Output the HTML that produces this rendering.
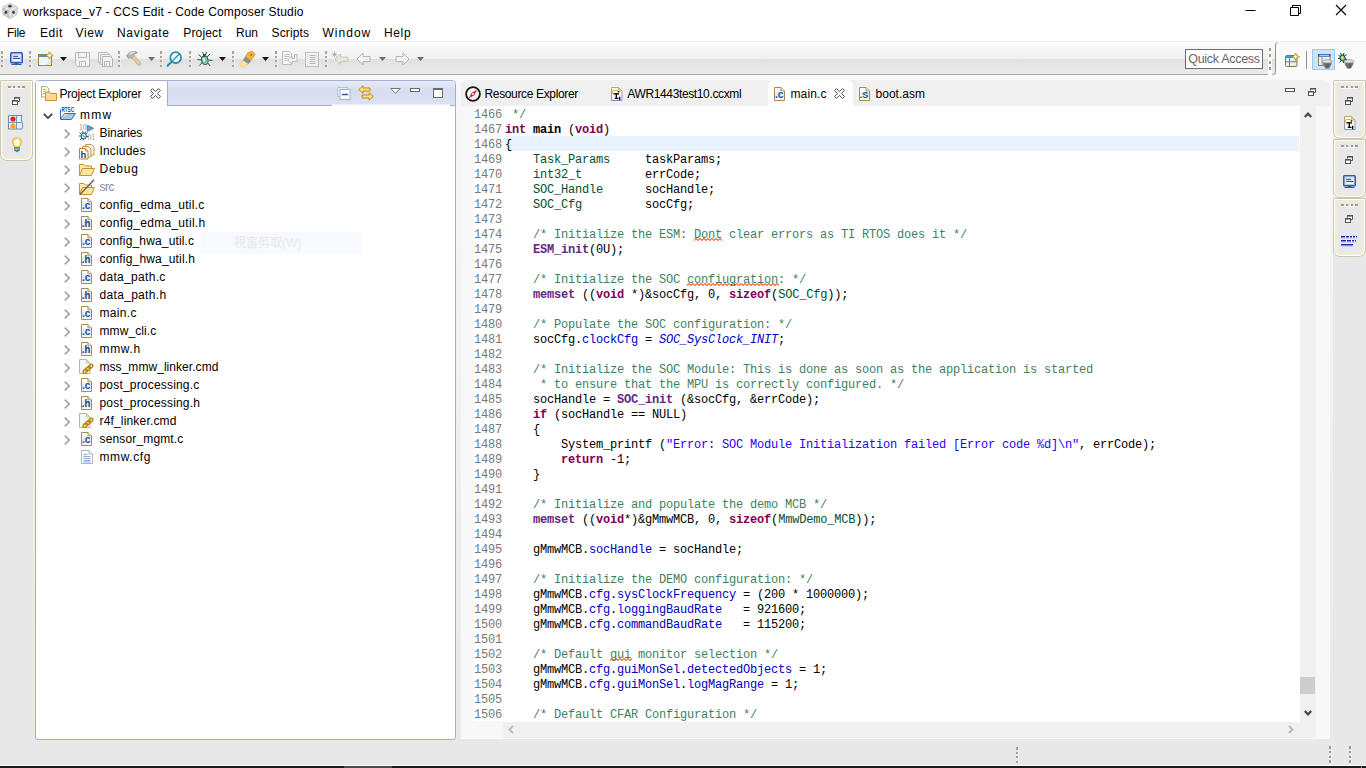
<!DOCTYPE html>
<html><head><meta charset="utf-8"><title>workspace_v7 - CCS Edit - Code Composer Studio</title>
<style>
*{box-sizing:border-box;margin:0;padding:0}
html,body{width:1366px;height:768px;overflow:hidden;background:#e8e8e8;font-family:"Liberation Sans","Noto Sans CJK TC",sans-serif;font-size:12px;color:#000}
.abs,.t,svg,.i{position:absolute}
svg{overflow:visible}
.t{white-space:nowrap;line-height:16px;height:16px}
#title{left:0;top:0;width:1366px;height:22px;background:#fff}
#menubar{left:0;top:22px;width:1366px;height:20px;background:#fff;border-bottom:1px solid #f0f0f0}
#toolbar{left:0;top:42px;width:1268px;height:33px;background:linear-gradient(#fcfcfc 0,#f0f0f0 17px,#e0e0e0 17px,#ebebeb 32px,#a8a8a8 32px,#a8a8a8 33px);}
#persp{left:1268px;top:42px;width:98px;height:38px;background:#fafafa}
#under{left:0;top:75px;width:1366px;height:5px;background:#f8f8f8;border-top:1px solid #fdfdfd}
#main{left:33px;top:80px;width:1300px;height:661px;background:linear-gradient(#f8f8f8,#e8e8e8)}
#pe{left:35px;top:80px;width:421px;height:660px;background:#fff;border:1px solid #a4afcf;border-radius:4px 4px 3px 3px;overflow:hidden}
#pehead{left:0;top:0;width:421px;height:25px;background:linear-gradient(#e6ebf8 0,#d6ddef 10px,#dbe3f3 24px);border-bottom:1px solid #a4aed0}
#petab{left:-1px;top:-1px;width:133px;height:26px;background:#fff;border-right:1px solid #a4aed0;border-radius:0 3px 0 0}
#ed{left:460px;top:80px;width:870px;height:659px;background:#fff;border-radius:7px 6px 3px 3px;overflow:hidden}
#edhead{left:0;top:0;width:870px;height:26px;background:#f0f0f0}
#edtab{left:308px;top:0;width:85px;height:26px;background:#fff;border-radius:6px 6px 0 0}
.code{position:absolute;left:45px;top:28px;font-family:"Liberation Mono",monospace;font-size:12px;letter-spacing:-.200px;line-height:15px;white-space:pre;color:#000}
.ln{position:absolute;left:14px;top:28px;width:28px;text-align:right;font-family:"Liberation Mono",monospace;font-size:12px;letter-spacing:-.200px;line-height:15px;white-space:pre;color:#787878}
.c{color:#3f7f5f}.k{color:#7f0055;font-weight:bold}.f{color:#642880;font-weight:bold}.ty{color:#005032}.fd{color:#0000c0}.en{color:#0000c0;font-style:italic}.s{color:#2a00ff}.b{font-weight:bold}
.row{position:absolute;left:0;height:18px;width:419px}
.stack{position:absolute;background:#eeebdc;width:33px}
.stack::before{content:"";position:absolute;left:0;top:0;right:0;bottom:0;border:1px solid #cbc6b4;border-radius:2px 2px 7px 7px;box-shadow:inset 0 0 0 1px #fff}
.stack::after{content:"";position:absolute;left:5px;top:5px;right:5px;bottom:5px;background:#e8e8e8}
.dots{position:absolute;height:2px;width:17px;background:linear-gradient(90deg,#a19a86 0,#a19a86 3px,transparent 3px,transparent 5px,#a19a86 5px,#a19a86 7px,transparent 7px,transparent 10px,#a19a86 10px,#a19a86 12px,transparent 12px,transparent 14px,#a19a86 14px,#a19a86 17px);box-shadow:0 1px 0 rgba(255,255,255,.6)}
.grip{position:absolute;width:2px;height:16px;top:8px;background:linear-gradient(180deg,#aaa28c 0,#aaa28c 3px,transparent 3px,transparent 5px,#aaa28c 5px,#aaa28c 7px,transparent 7px,transparent 9.500px,#aaa28c 9.500px,#aaa28c 11.500px,transparent 11.500px,transparent 14px,#aaa28c 14px,#aaa28c 16px);box-shadow:1px 0 0 rgba(255,255,255,.3)}
</style></head><body>
<div id="title" class="abs">
<svg style="left:2px;top:3px" width="16" height="16" viewBox="0 0 16 16"><g opacity=".9"><path d="M8 .5 L15.500 4 L14.800 11.500 L8 15.500 L1.200 11.500 L.5 4z" fill="#c8c8c8" stroke="#9a9a9a" stroke-width=".6"/><path d="M8 .5 L15.500 4 L8 7.500 L.5 4z" fill="#d0d0d0"/><path d="M.5 4 L8 7.500 L8 15.500 L1.200 11.500z" fill="#b8b8b8"/><path d="M8 7.500 L15.500 4 L14.800 11.500 L8 15.500z" fill="#cdcdcd"/><path d="M.5 4 L8 7.500 L15.500 4 M8 7.500 V15.500 M4.200 2.300 L11.800 5.800 M11.800 2.300 L4.200 5.800 M4.200 5.800 V13.300 M11.800 5.800 V13.300 M.8 7.800 L8 11.500 L15.200 7.800" fill="none" stroke="#fff" stroke-width=".8" opacity=".8"/><ellipse cx="8" cy="3.300" rx="1.900" ry="1.300" fill="#2a2a2a"/><ellipse cx="4" cy="9.300" rx="1.300" ry="1.800" fill="#2a2a2a"/><ellipse cx="11.500" cy="9.200" rx="1.300" ry="1.700" fill="#333"/></g></svg>
<span class="t" style="left:23.2px;top:4px;letter-spacing:0.18px;">workspace_v7 - CCS Edit - Code Composer Studio</span>
<svg style="left:1245px;top:4px" width="110" height="14" viewBox="0 0 110 14"><path d="M0.5 6.5h10" stroke="#000" stroke-width="1" fill="none"/><path d="M45.5 3.5h8v8h-8z M47.5 3.5v-2h8v8h-2" stroke="#000" stroke-width="1" fill="none"/><path d="M91 1l10 10M101 1l-10 10" stroke="#000" stroke-width="1.1" fill="none"/></svg>
</div>
<div id="menubar" class="abs">
<span class="t" style="left:7px;top:3px;letter-spacing:-0.28px;">File</span><span class="t" style="left:40px;top:3px;letter-spacing:0.54px;">Edit</span><span class="t" style="left:75.5px;top:3px;letter-spacing:0.63px;">View</span><span class="t" style="left:117px;top:3px;letter-spacing:0.66px;">Navigate</span><span class="t" style="left:183.3px;top:3px;letter-spacing:0.16px;">Project</span><span class="t" style="left:236px;top:3px;letter-spacing:-0.01px;">Run</span><span class="t" style="left:271.5px;top:3px;letter-spacing:0.14px;">Scripts</span><span class="t" style="left:322.5px;top:3px;letter-spacing:1.02px;">Window</span><span class="t" style="left:384px;top:3px;letter-spacing:0.64px;">Help</span>
</div>
<div id="under" class="abs"></div><div id="main" class="abs"></div>
<div id="persp" class="abs"></div>
<div id="toolbar" class="abs"><div class="abs" style="left:0;top:1px;width:0;height:0">
<div class="grip" style="left:1px"></div><div class="grip" style="left:29px"></div><div class="grip" style="left:118px"></div><div class="grip" style="left:160px"></div><div class="grip" style="left:189px"></div><div class="grip" style="left:232px"></div><div class="grip" style="left:275px"></div><div class="grip" style="left:325px"></div>
<!-- monitor -->
<svg style="left:10px;top:9px" width="13" height="14" viewBox="0 0 13 14"><rect x=".8" y=".8" width="11.400" height="9.900" rx=".8" fill="#eaf4ff" stroke="#2860b0" stroke-width="1.600"/><rect x="2" y="2" width="9" height="7.500" fill="none" stroke="#9aa8c0" stroke-width=".5"/><path d="M3.200 4.300h5M3.200 6.400h7" stroke="#28388a" stroke-width="1"/><path d="M4.500 11h4v1h3v1h-10v-1h3z" fill="#2860b0"/></svg>
<!-- new -->
<svg style="left:38px;top:9px" width="16" height="15" viewBox="0 0 16 15"><rect x=".5" y="2.500" width="13" height="11" fill="#ecf6ff" stroke="#a08838"/><rect x="1" y="3" width="12" height="2" fill="#3a9ad8"/><path d="M12.500 6 C12.500 11 8 13 3 13.200 L13 13z" fill="#f6e08a" opacity=".75"/><path d="M11.500 -.2 L12.700 2.300 L15.200 3.500 L12.700 4.700 L11.500 7.200 L10.300 4.700 L7.800 3.500 L10.300 2.300Z" fill="#fffbe6" stroke="#b89020" stroke-width="1"/></svg>
<svg style="left:60px;top:14px" width="7" height="4"><path d="M0 0h7L3.5 4z" fill="#111"/></svg>
<!-- save disabled -->
<svg style="left:75px;top:9px" width="15" height="15" viewBox="0 0 15 15"><path d="M.5 .5h14v14H2.5l-2-2z" fill="#f2f2f2" stroke="#b9b9b9"/><path d="M3.5 .5v5h8v-5M4.5 14.5v-5h6v5" fill="none" stroke="#b9b9b9"/><path d="M6.5 11v2.5" stroke="#b9b9b9"/></svg>
<!-- save all disabled -->
<svg style="left:98px;top:9px" width="15" height="15" viewBox="0 0 15 15"><path d="M.5 .5h9l2 2v8h-11z" fill="#f2f2f2" stroke="#bdbdbd"/><path d="M2.5 2.5h9l2 2v8h-11z" fill="#f2f2f2" stroke="#bdbdbd"/><path d="M4.500 4.500h8l2 2v8h-10z" fill="#f2f2f2" stroke="#b5b5b5"/><path d="M6.5 14.500v-5h5v5M8.500 11.500v2" fill="none" stroke="#b5b5b5"/></svg>
<!-- hammer -->
<svg style="left:126px;top:8px" width="16" height="16" viewBox="0 0 16 16"><path d="M.5 4.800 L4 1 L9.500 .4 L11.500 1.800 L9 2.400 L7.600 4 L8.400 5.300 L5.500 8 L4 6.400 L2.500 7.600z" fill="#b4b4b4" stroke="#8a8a8a" stroke-width=".7"/><path d="M4 1 L9.500 .4 L7 2.500 L3 4z" fill="#dcdcdc"/><path d="M5.800 6.500 L8.200 4.600 L15 12 L14.600 14 L12.500 14.800z" fill="#e4c8a6" stroke="#c6a47c" stroke-width=".7"/></svg>
<svg style="left:148px;top:14px" width="7" height="4"><path d="M0 0h7L3.500 4z" fill="#6c6c6c"/></svg>
<!-- search off -->
<svg style="left:166px;top:8px" width="17" height="17" viewBox="0 0 17 17"><circle cx="9.700" cy="6.600" r="5.400" fill="#fff" stroke="#2490ac" stroke-width="1.800"/><path d="M5.600 10.800 L1.600 14.800" stroke="#2490ac" stroke-width="2.200" stroke-linecap="round"/><path d="M13 3.200 L6.600 9.800" stroke="#2490ac" stroke-width="1.300"/></svg>
<!-- bug -->
<svg style="left:197px;top:8px" width="16" height="16" viewBox="0 0 16 16"><path d="M1.500 3.500l3.500 3M13 3l-3 3.200M.3 8.500l4 .5M15.500 9.500l-4-.5M2.500 14.500l3-3.500M13 15l-2.500-3.500M5.500 1l1.500 3.500M9.500 .8l-1 3.500" stroke="#1f5c54" stroke-width="1" fill="none"/><ellipse cx="7.800" cy="9.200" rx="3.200" ry="4.400" fill="#8fc39c" stroke="#1f5c54" stroke-width="1" transform="rotate(-12 7.800 9.200)"/><circle cx="7.400" cy="4.600" r="1.500" fill="#1f5c54"/><ellipse cx="7" cy="8.800" rx="1.100" ry="2" fill="#e2f0dc" transform="rotate(-12 7 8.800)"/></svg>
<svg style="left:219px;top:14px" width="7" height="4"><path d="M0 0h7L3.500 4z" fill="#111"/></svg>
<!-- flashlight -->
<svg style="left:239px;top:8px" width="17" height="17" viewBox="0 0 17 17"><path d="M9 1.500 L13.500 .5 L16 3.500 L11.500 10 L6.500 6z" fill="#f7b63c" stroke="#d48a17" stroke-width=".8"/><path d="M6.500 6 L11.500 10 L9 13 L4 9.500z" fill="#8f8f96" stroke="#77777e" stroke-width=".6"/><path d="M4 9.500 L9 13 L4.500 16 L.8 14.500z" fill="#ffeaa0" stroke="#e8c050" stroke-width=".6"/><circle cx="12.300" cy="3.800" r=".9" fill="#3465a8"/></svg>
<svg style="left:262px;top:14px" width="7" height="4"><path d="M0 0h7L3.500 4z" fill="#111"/></svg>
<!-- disabled doc arrow -->
<svg style="left:282px;top:8px" width="16" height="16" viewBox="0 0 16 16"><path d="M.5 .5h7l2 2v11h-9z" fill="#f4f4f4" stroke="#bcbcbc"/><path d="M2.500 3.500h5M2.500 5.500h5M2.500 7.500h3M2.500 9.500h2" stroke="#c2c2c2"/><path d="M12.500 3.500h2.500v7h-5v2.500l-4.500-4 4.500-4v2.500h2.500z" fill="#f2f2f2" stroke="#b4b4b4" stroke-width=".9"/></svg>
<!-- disabled list -->
<svg style="left:305px;top:9px" width="15" height="15" viewBox="0 0 15 15"><rect x=".5" y=".5" width="13" height="14" fill="#f4f4f4" stroke="#c0c0c0"/><path d="M4.500 3.500h6M4.500 5.500h6M4.500 7.500h6M4.500 9.500h6M4.500 11.500h6" stroke="#b4b4b4"/><path d="M2.500 2v11M12 2v11" stroke="#d0d0d0" stroke-dasharray="1 1"/></svg>
<!-- last edit -->
<svg style="left:332px;top:8px" width="17" height="16" viewBox="0 0 17 16"><path d="M3 8 L8.500 3 V6 H16 V10.500 H8.500 V13.500z" fill="#e9e6d6" stroke="#c9c5b4" stroke-width=".9"/><path d="M2.500 .5v6M-.2 3.500h5.400M.6 1.600l3.800 3.800M4.400 1.600L.6 5.400" stroke="#8f9ab8" stroke-width=".6"/></svg>
<!-- back -->
<svg style="left:356px;top:8px" width="15" height="16" viewBox="0 0 15 16"><path d="M1 8 L7 2 V5.500 H14 V10.500 H7 V14z" fill="#f3f3f3" stroke="#b4b4b4" stroke-width="1"/></svg>
<svg style="left:379px;top:14px" width="7" height="4"><path d="M0 0h7L3.500 4z" fill="#6c6c6c"/></svg>
<!-- fwd -->
<svg style="left:395px;top:8px" width="15" height="16" viewBox="0 0 15 16"><path d="M14 8 L8 2 V5.500 H1 V10.500 H8 V14z" fill="#f3f3f3" stroke="#b4b4b4" stroke-width="1"/></svg>
<svg style="left:417px;top:14px" width="7" height="4"><path d="M0 0h7L3.500 4z" fill="#6c6c6c"/></svg>
<!-- quick access -->
<div class="abs" style="left:1185px;top:6px;width:78px;height:20px;background:#fff;border:1px solid #6e6e6e"></div>
<span class="t" style="left:1188.3px;top:7.5px;letter-spacing:-0.30px;font-size:12.5px;color:#666">Quick Access</span>
</div></div>
<!-- perspective switcher -->
<div class="abs" style="left:1272px;top:42px;width:4px;height:33px;background:linear-gradient(#fafafa 0,#f0f0f0 17px,#e2e2e2 17px,#ebebeb 32px)"></div><svg style="left:1270px;top:42px" width="8" height="34" viewBox="0 0 8 34"><path d="M7.500 .5 Q5.500 .8 5.500 3 V30 Q5.500 32.500 2.500 32.500" fill="none" stroke="#8e8e8e" stroke-width="1"/></svg><div class="abs" style="left:1269px;top:48px;width:2px;height:22px;background:linear-gradient(180deg,#a39a82 0,#a39a82 3px,transparent 3px,transparent 6.500px,#a39a82 6.500px,#a39a82 9.500px,transparent 9.500px,transparent 13px,#a39a82 13px,#a39a82 16px,transparent 16px,transparent 19px,#a39a82 19px,#a39a82 22px)"></div>
<svg style="left:1285px;top:52px" width="15" height="15" viewBox="0 0 15 15"><rect x=".5" y="3.500" width="11.500" height="11" rx="1" fill="#dff2ff" stroke="#8c7434"/><rect x="1" y="4" width="10.500" height="2" fill="#4a90d8"/><path d="M4.500 6v8.500M.5 9.800h11.500" stroke="#8c7434" stroke-width=".9"/><path d="M10.700 1 L11.800 3.600 L14.400 4.700 L11.800 5.800 L10.700 8.400 L9.600 5.800 L7 4.700 L9.600 3.600Z" fill="#fffdf0" stroke="#c09020" stroke-width="1"/></svg>
<div class="abs" style="left:1306px;top:51px;width:1px;height:18px;background:#8c8c8c"></div>
<div class="abs" style="left:1312px;top:49px;width:23px;height:21px;background:#cce4f7;border:1px solid #99c9ef"></div>
<svg style="left:1318px;top:54px" width="15" height="14" viewBox="0 0 15 14"><rect x=".5" y=".5" width="11.500" height="11" fill="#dff2ff" stroke="#a08848"/><rect x="0" y="0" width="12.500" height="2.700" fill="#2a5cc0"/><path d="M1.500 1.350h9.500" stroke="#fff" stroke-width=".8"/><path d="M4 2.700v9" stroke="#a08848" stroke-width=".9"/><defs><linearGradient id="gC" x1="0" y1="0" x2="1" y2="0"><stop offset="0" stop-color="#8e8e8e"/><stop offset=".55" stop-color="#5c5c5c"/><stop offset="1" stop-color="#8a8a8a"/></linearGradient></defs><path d="M4.4 7.200 h9.600 l-.6 3.500 l-2.400 3.700 h-3.600 l-2.400-3.700z" fill="url(#gC)"/><ellipse cx="9.2" cy="7.400" rx="4.800" ry="1.700" fill="#e2e2e2" stroke="#8c8c8c" stroke-width=".7"/></svg>
<svg style="left:1338px;top:53px" width="17" height="15" viewBox="0 0 17 15"><path d="M.5 2.500l3 1.800M8.500 1.500l-2.700 2.300M0 5.500l3 .2M9 6.500l-3-.5M1.500 9.500l2-2.500M5.500 10l-.5-2.500M2.500 0l1.200 3M6 0l-.8 3" stroke="#0c4038" stroke-width="1" fill="none"/><ellipse cx="4.600" cy="5" rx="2.500" ry="2.900" fill="#8fd45c" stroke="#0c4038" stroke-width=".9" transform="rotate(-25 4.600 5)"/><circle cx="4.200" cy="4.600" r=".9" fill="#f0ffd8"/><defs><linearGradient id="gD" x1="0" y1="0" x2="1" y2="0"><stop offset="0" stop-color="#8e8e8e"/><stop offset=".55" stop-color="#5c5c5c"/><stop offset="1" stop-color="#8a8a8a"/></linearGradient></defs><path d="M6.2 8.200 h9.600 l-.6 3.500 l-2.400 3.700 h-3.600 l-2.400-3.700z" fill="url(#gD)"/><ellipse cx="11" cy="8.400" rx="4.800" ry="1.700" fill="#e2e2e2" stroke="#8c8c8c" stroke-width=".7"/></svg>
<!-- left trim stack -->
<div class="stack" style="left:0;top:80px;height:81px"></div>
<div class="dots" style="left:8px;top:86px"></div>
<svg style="left:12px;top:97px" width="8" height="8" viewBox="0 0 8 8"><path d="M2.500 2.500v-2h5v4h-1.500" fill="#fff" stroke="#5a524a" stroke-width="1"/><path d="M2 .8h6" stroke="#5a524a" stroke-width="1.600"/><rect x=".5" y="3.500" width="5" height="4" fill="#fff" stroke="#5a524a"/><path d="M0 3.800h6" stroke="#5a524a" stroke-width="1.600"/></svg>
<svg style="left:8px;top:115px" width="15" height="15" viewBox="0 0 15 15"><path d="M.5 .5h13.500q-1.500 3.500 0 7t0 6.500h-13.500z" fill="#e8f0fa" stroke="#6a8cc0"/><path d="M.5 7.500h13M8.500 .5v13.500" stroke="#6a8cc0" stroke-width=".9"/><circle cx="5" cy="4" r="2.600" fill="#e0282c"/><path d="M2.500 13.500v-2.500a2.500 2.500 0 0 1 5 0v2.500z" fill="#f5a623"/></svg>
<svg style="left:11.500px;top:137px" width="10" height="15.500" viewBox="0 0 11 17"><path d="M5.500 .8a4.700 4.700 0 0 1 4.700 4.700c0 2.200-1.700 3-2 5.500h-5.400c-.3-2.500-2-3.300-2-5.500a4.700 4.700 0 0 1 4.700-4.700z" fill="#fff3c4" stroke="#f0b020" stroke-width="1.300"/><ellipse cx="5.500" cy="6.500" rx="2.200" ry="3" fill="#fff" opacity=".8"/><rect x="3" y="11.500" width="5" height="3.500" fill="#7fa7d8" stroke="#4a6a98" stroke-width=".8"/><path d="M4 16h3" stroke="#4a6a98"/></svg>
<div id="pe" class="abs"><div id="pehead" class="abs"></div><div class="abs" style="left:296px;top:24px;width:118px;height:1px;background:#fff"></div><div class="abs" style="left:296px;top:23px;width:118px;height:1px;background:rgba(255,255,255,.45)"></div><div id="petab" class="abs"></div>
<svg style="left:5px;top:5px" width="16" height="15" viewBox="0 0 16 15"><path d="M.5 .5h5l2.500 2.500v8h-7.500z" fill="#fffdf5" stroke="#b5a47c"/><path d="M2 3.500h3M2 5.500h2M2 7.500h2" stroke="#8aa6d8" stroke-width=".9"/><path d="M4.500 14.500v-8.500h4l1.200 1.500h5.800v7z" fill="#fbdc8c" stroke="#c8922c"/></svg>
<span class="t" style="left:23.5px;top:5px;letter-spacing:-0.23px;">Project Explorer</span>
<svg style="left:114px;top:7px" width="11" height="11" viewBox="0 0 11 11"><path d="M.6 2.500 L2.500 .6 L5.500 3.600 L8.500 .6 L10.400 2.500 L7.400 5.500 L10.400 8.500 L8.500 10.400 L5.500 7.400 L2.500 10.400 L.6 8.500 L3.600 5.500z" fill="#fff" stroke="#4c4c4c" stroke-width="1"/></svg>
<svg style="left:301px;top:6px" width="14" height="13" viewBox="0 0 14 13"><rect x=".5" y=".5" width="10" height="9" fill="#e8eef8" stroke="#b4c0d8"/><rect x="3" y="2.500" width="10" height="10" fill="#fff" stroke="#9fb0cc"/><path d="M5 7.500h6" stroke="#1f5fa8" stroke-width="1.500"/></svg>
<svg style="left:322px;top:4px" width="16" height="16" viewBox="0 0 16 16"><path d="M.8 4.500 L5 .8 V3 H12 V6 H5 V8.200z" fill="#fde08a" stroke="#c8860b" stroke-width="1"/><path d="M15.200 11.500 L11 7.800 V10 H4 V13 H11 V15.200z" fill="#fde08a" stroke="#c8860b" stroke-width="1"/></svg>
<svg style="left:354px;top:7px" width="11" height="6" viewBox="0 0 11 6"><path d="M.8 .5h9.400L5.500 5.300z" fill="#fff" stroke="#6a6a6a" stroke-width=".9"/></svg>
<div class="abs" style="left:374px;top:7px;width:10px;height:4px;background:#fff;border:1px solid #6a6a6a"></div>
<div class="abs" style="left:397px;top:7px;width:10px;height:10px;background:#fff;border:1px solid #6a6a6a;border-top-width:2px"></div>
<div class="abs" style="left:165px;top:151px;width:160px;height:22px;background:#f6f9fd"></div>
<span class="t" style="left:198px;top:154px;color:#e9e9e9;font-size:12px">視窗剪取(W)</span>
<svg style="left:7px;top:32px" width="10" height="6" viewBox="0 0 10 6"><path d="M.8 .8 L5 5 L9.200 .8" fill="none" stroke="#3c3c3c" stroke-width="1.700"/></svg><svg style="left:24px;top:26px" width="16" height="15" viewBox="0 0 16 15"><text x="1.500" y="5.200" font-family="Liberation Sans,sans-serif" font-size="6.800" font-weight="bold" fill="#1f3f8c" textLength="12.500" lengthAdjust="spacingAndGlyphs">RTSC</text><path d="M.5 12 V2.500" stroke="#3c6ab4"/><path d="M.5 12.500 L4.500 6.500 H15.500 L11.500 12.500z" fill="#a9c8ee" stroke="#3c6ab4"/><path d="M1.200 11.800 L4.700 7 L7.500 7z" fill="#f8e08a"/></svg><span class="t" style="left:44px;top:26px;letter-spacing:1.26px;">mmw</span>
<svg style="left:28px;top:48px" width="6" height="10" viewBox="0 0 6 10"><path d="M.8 .6 L5.200 5 L.8 9.400" fill="none" stroke="#a2a2a2" stroke-width="1.700"/></svg><svg style="left:43px;top:43px" width="17" height="17" viewBox="0 0 17 17"><text x="0" y="6.400" font-family="Liberation Serif,serif" font-size="7.500" fill="#8c8c8c">10</text><text x="8.400" y="15.600" font-family="Liberation Serif,serif" font-size="7.500" fill="#8c8c8c">01</text><path d="M8.300 1.200 L14.600 4.300 L8.300 7.400z" fill="#6f9cc0" stroke="#3c6c94" stroke-width=".8"/><path d="M.5 8.500l2.500 2M0 12h2.500M1 16l2.500-2.500M8.500 8.500l-2 2M9.500 12.500h-2.500M3.500 7l1 2.500M6.500 7.500l-.7 2M4 16.500l.5-2" stroke="#27507c" stroke-width="1" fill="none"/><ellipse cx="4.800" cy="12" rx="2.600" ry="2.900" fill="#d4ece4" stroke="#27507c" stroke-width="1"/><path d="M3.500 11l2.500 2" stroke="#3c9c5c" stroke-width="1"/></svg><span class="t" style="left:63.5px;top:44px;letter-spacing:-0.07px;">Binaries</span>
<svg style="left:28px;top:66px" width="6" height="10" viewBox="0 0 6 10"><path d="M.8 .6 L5.200 5 L.8 9.400" fill="none" stroke="#a2a2a2" stroke-width="1.700"/></svg><svg style="left:43px;top:62px" width="16" height="17" viewBox="0 0 16 17"><path d="M6.500 1.500h6l2.500 2.500v8h-8.500z" fill="#fbf7ec" stroke="#c08a3c" stroke-width=".9"/><path d="M3.500 3.500h6l2.500 2.500v8h-8.500z" fill="#f7f4ee" stroke="#c08a3c" stroke-width=".9"/><path d="M.5 5.500h6l2.500 2.500v8h-8.500z" fill="#fff" stroke="#b8822c"/><path d="M6.500 5.500v2.500h2.500" fill="#f3e2b8" stroke="#b8822c" stroke-width=".8"/><text x="1.600" y="14.800" font-family="Liberation Sans,sans-serif" font-weight="bold" font-size="9.500" fill="#1c3c7c">h</text></svg><span class="t" style="left:63.5px;top:62px;letter-spacing:0.17px;">Includes</span>
<svg style="left:28px;top:84px" width="6" height="10" viewBox="0 0 6 10"><path d="M.8 .6 L5.200 5 L.8 9.400" fill="none" stroke="#a2a2a2" stroke-width="1.700"/></svg><svg style="left:43px;top:82px" width="16" height="13" viewBox="0 0 16 13"><path d="M.5 12.500v-11h4.500l1.500 1.500h6v3" fill="#fbe9b8" stroke="#c8922c"/><path d="M.5 12.500 L3.500 5.500 H15.500 L12.500 12.500z" fill="#fce5a2" stroke="#c8922c"/></svg><span class="t" style="left:63.5px;top:80px;letter-spacing:0.76px;">Debug</span>
<svg style="left:28px;top:102px" width="6" height="10" viewBox="0 0 6 10"><path d="M.8 .6 L5.200 5 L.8 9.400" fill="none" stroke="#a2a2a2" stroke-width="1.700"/></svg><svg style="left:43px;top:98px" width="16" height="16" viewBox="0 0 16 16"><path d="M.5 15.500v-11h4.500l1.500 1.500h6v3" fill="#fbe9b8" stroke="#c8922c"/><path d="M.5 15.500 L3.500 8.500 H15.500 L12.500 15.500z" fill="#fce5a2" stroke="#c8922c"/><path d="M1 15.500 L15 .8" stroke="#6a5a5a" stroke-width="1.300"/></svg><span class="t" style="left:63.5px;top:98px;letter-spacing:-0.55px;color:#8c8c8c">src</span>
<svg style="left:28px;top:120px" width="6" height="10" viewBox="0 0 6 10"><path d="M.8 .6 L5.200 5 L.8 9.400" fill="none" stroke="#a2a2a2" stroke-width="1.700"/></svg><svg style="left:45px;top:117px" width="12" height="14" viewBox="0 0 12 14"><path d="M.5 .5h6.500l3.500 3.500v9.500h-10z" fill="#fff" stroke="#a48b52"/><path d="M7 .5v3.500h3.500" fill="#f3ead0" stroke="#a48b52"/><rect x="1" y="4.500" width="9" height="7" fill="#e4ecf8"/><text x="1" y="11" font-family="Liberation Sans,sans-serif" font-weight="bold" font-size="10.500" fill="#1f4f9c" textLength="8.500" lengthAdjust="spacingAndGlyphs">.c</text></svg><span class="t" style="left:63.5px;top:116px;letter-spacing:0.28px;">config_edma_util.c</span>
<svg style="left:28px;top:138px" width="6" height="10" viewBox="0 0 6 10"><path d="M.8 .6 L5.200 5 L.8 9.400" fill="none" stroke="#a2a2a2" stroke-width="1.700"/></svg><svg style="left:45px;top:135px" width="12" height="14" viewBox="0 0 12 14"><path d="M.5 .5h6.500l3.500 3.500v9.500h-10z" fill="#fff" stroke="#a48b52"/><path d="M7 .5v3.500h3.500" fill="#f3ead0" stroke="#a48b52"/><rect x="1" y="4.500" width="9" height="7" fill="#e4ecf8"/><text x=".8" y="11.200" font-family="Liberation Sans,sans-serif" font-weight="bold" font-size="10" fill="#1f3f7c" textLength="8.500" lengthAdjust="spacingAndGlyphs">.h</text></svg><span class="t" style="left:63.5px;top:134px;letter-spacing:0.29px;">config_edma_util.h</span>
<svg style="left:28px;top:156px" width="6" height="10" viewBox="0 0 6 10"><path d="M.8 .6 L5.200 5 L.8 9.400" fill="none" stroke="#a2a2a2" stroke-width="1.700"/></svg><svg style="left:45px;top:153px" width="12" height="14" viewBox="0 0 12 14"><path d="M.5 .5h6.500l3.500 3.500v9.500h-10z" fill="#fff" stroke="#a48b52"/><path d="M7 .5v3.500h3.500" fill="#f3ead0" stroke="#a48b52"/><rect x="1" y="4.500" width="9" height="7" fill="#e4ecf8"/><text x="1" y="11" font-family="Liberation Sans,sans-serif" font-weight="bold" font-size="10.500" fill="#1f4f9c" textLength="8.500" lengthAdjust="spacingAndGlyphs">.c</text></svg><span class="t" style="left:63.5px;top:152px;letter-spacing:0.16px;">config_hwa_util.c</span>
<svg style="left:28px;top:174px" width="6" height="10" viewBox="0 0 6 10"><path d="M.8 .6 L5.200 5 L.8 9.400" fill="none" stroke="#a2a2a2" stroke-width="1.700"/></svg><svg style="left:45px;top:171px" width="12" height="14" viewBox="0 0 12 14"><path d="M.5 .5h6.500l3.500 3.500v9.500h-10z" fill="#fff" stroke="#a48b52"/><path d="M7 .5v3.500h3.500" fill="#f3ead0" stroke="#a48b52"/><rect x="1" y="4.500" width="9" height="7" fill="#e4ecf8"/><text x=".8" y="11.200" font-family="Liberation Sans,sans-serif" font-weight="bold" font-size="10" fill="#1f3f7c" textLength="8.500" lengthAdjust="spacingAndGlyphs">.h</text></svg><span class="t" style="left:63.5px;top:170px;letter-spacing:0.17px;">config_hwa_util.h</span>
<svg style="left:28px;top:192px" width="6" height="10" viewBox="0 0 6 10"><path d="M.8 .6 L5.200 5 L.8 9.400" fill="none" stroke="#a2a2a2" stroke-width="1.700"/></svg><svg style="left:45px;top:189px" width="12" height="14" viewBox="0 0 12 14"><path d="M.5 .5h6.500l3.500 3.500v9.500h-10z" fill="#fff" stroke="#a48b52"/><path d="M7 .5v3.500h3.500" fill="#f3ead0" stroke="#a48b52"/><rect x="1" y="4.500" width="9" height="7" fill="#e4ecf8"/><text x="1" y="11" font-family="Liberation Sans,sans-serif" font-weight="bold" font-size="10.500" fill="#1f4f9c" textLength="8.500" lengthAdjust="spacingAndGlyphs">.c</text></svg><span class="t" style="left:63.5px;top:188px;letter-spacing:0.31px;">data_path.c</span>
<svg style="left:28px;top:210px" width="6" height="10" viewBox="0 0 6 10"><path d="M.8 .6 L5.200 5 L.8 9.400" fill="none" stroke="#a2a2a2" stroke-width="1.700"/></svg><svg style="left:45px;top:207px" width="12" height="14" viewBox="0 0 12 14"><path d="M.5 .5h6.500l3.500 3.500v9.500h-10z" fill="#fff" stroke="#a48b52"/><path d="M7 .5v3.500h3.500" fill="#f3ead0" stroke="#a48b52"/><rect x="1" y="4.500" width="9" height="7" fill="#e4ecf8"/><text x=".8" y="11.200" font-family="Liberation Sans,sans-serif" font-weight="bold" font-size="10" fill="#1f3f7c" textLength="8.500" lengthAdjust="spacingAndGlyphs">.h</text></svg><span class="t" style="left:63.5px;top:206px;letter-spacing:0.32px;">data_path.h</span>
<svg style="left:28px;top:228px" width="6" height="10" viewBox="0 0 6 10"><path d="M.8 .6 L5.200 5 L.8 9.400" fill="none" stroke="#a2a2a2" stroke-width="1.700"/></svg><svg style="left:45px;top:225px" width="12" height="14" viewBox="0 0 12 14"><path d="M.5 .5h6.500l3.500 3.500v9.500h-10z" fill="#fff" stroke="#a48b52"/><path d="M7 .5v3.500h3.500" fill="#f3ead0" stroke="#a48b52"/><rect x="1" y="4.500" width="9" height="7" fill="#e4ecf8"/><text x="1" y="11" font-family="Liberation Sans,sans-serif" font-weight="bold" font-size="10.500" fill="#1f4f9c" textLength="8.500" lengthAdjust="spacingAndGlyphs">.c</text></svg><span class="t" style="left:63.5px;top:224px;letter-spacing:0.33px;">main.c</span>
<svg style="left:28px;top:246px" width="6" height="10" viewBox="0 0 6 10"><path d="M.8 .6 L5.200 5 L.8 9.400" fill="none" stroke="#a2a2a2" stroke-width="1.700"/></svg><svg style="left:45px;top:243px" width="12" height="14" viewBox="0 0 12 14"><path d="M.5 .5h6.500l3.500 3.500v9.500h-10z" fill="#fff" stroke="#a48b52"/><path d="M7 .5v3.500h3.500" fill="#f3ead0" stroke="#a48b52"/><rect x="1" y="4.500" width="9" height="7" fill="#e4ecf8"/><text x="1" y="11" font-family="Liberation Sans,sans-serif" font-weight="bold" font-size="10.500" fill="#1f4f9c" textLength="8.500" lengthAdjust="spacingAndGlyphs">.c</text></svg><span class="t" style="left:63.5px;top:242px;letter-spacing:0.10px;">mmw_cli.c</span>
<svg style="left:28px;top:264px" width="6" height="10" viewBox="0 0 6 10"><path d="M.8 .6 L5.200 5 L.8 9.400" fill="none" stroke="#a2a2a2" stroke-width="1.700"/></svg><svg style="left:45px;top:261px" width="12" height="14" viewBox="0 0 12 14"><path d="M.5 .5h6.500l3.500 3.500v9.500h-10z" fill="#fff" stroke="#a48b52"/><path d="M7 .5v3.500h3.500" fill="#f3ead0" stroke="#a48b52"/><rect x="1" y="4.500" width="9" height="7" fill="#e4ecf8"/><text x=".8" y="11.200" font-family="Liberation Sans,sans-serif" font-weight="bold" font-size="10" fill="#1f3f7c" textLength="8.500" lengthAdjust="spacingAndGlyphs">.h</text></svg><span class="t" style="left:63.5px;top:260px;letter-spacing:0.65px;">mmw.h</span>
<svg style="left:28px;top:282px" width="6" height="10" viewBox="0 0 6 10"><path d="M.8 .6 L5.200 5 L.8 9.400" fill="none" stroke="#a2a2a2" stroke-width="1.700"/></svg><svg style="left:43px;top:278px" width="15" height="15" viewBox="0 0 15 15"><path d="M.5 .5h7l3.500 3.500v10.500h-10.500z" fill="#f4f7fb" stroke="#b4b4b4"/><path d="M7.500 .5v3.500h3.500z" fill="#f3e6b8" stroke="#c8b888" stroke-width=".8"/><g fill="none" stroke="#b8860b" stroke-width="1.400"><ellipse cx="6.300" cy="12.300" rx="2.600" ry="1.600" transform="rotate(-42 6.300 12.300)"/><ellipse cx="9" cy="9.800" rx="2.800" ry="1.700" transform="rotate(-42 9 9.800)"/><ellipse cx="11.700" cy="7.400" rx="2.500" ry="1.600" transform="rotate(-42 11.700 7.400)"/></g></svg><span class="t" style="left:63.5px;top:278px;letter-spacing:0.05px;">mss_mmw_linker.cmd</span>
<svg style="left:28px;top:300px" width="6" height="10" viewBox="0 0 6 10"><path d="M.8 .6 L5.200 5 L.8 9.400" fill="none" stroke="#a2a2a2" stroke-width="1.700"/></svg><svg style="left:45px;top:297px" width="12" height="14" viewBox="0 0 12 14"><path d="M.5 .5h6.500l3.500 3.500v9.500h-10z" fill="#fff" stroke="#a48b52"/><path d="M7 .5v3.500h3.500" fill="#f3ead0" stroke="#a48b52"/><rect x="1" y="4.500" width="9" height="7" fill="#e4ecf8"/><text x="1" y="11" font-family="Liberation Sans,sans-serif" font-weight="bold" font-size="10.500" fill="#1f4f9c" textLength="8.500" lengthAdjust="spacingAndGlyphs">.c</text></svg><span class="t" style="left:63.5px;top:296px;letter-spacing:0.19px;">post_processing.c</span>
<svg style="left:28px;top:318px" width="6" height="10" viewBox="0 0 6 10"><path d="M.8 .6 L5.200 5 L.8 9.400" fill="none" stroke="#a2a2a2" stroke-width="1.700"/></svg><svg style="left:45px;top:315px" width="12" height="14" viewBox="0 0 12 14"><path d="M.5 .5h6.500l3.500 3.500v9.500h-10z" fill="#fff" stroke="#a48b52"/><path d="M7 .5v3.500h3.500" fill="#f3ead0" stroke="#a48b52"/><rect x="1" y="4.500" width="9" height="7" fill="#e4ecf8"/><text x=".8" y="11.200" font-family="Liberation Sans,sans-serif" font-weight="bold" font-size="10" fill="#1f3f7c" textLength="8.500" lengthAdjust="spacingAndGlyphs">.h</text></svg><span class="t" style="left:63.5px;top:314px;letter-spacing:0.19px;">post_processing.h</span>
<svg style="left:28px;top:336px" width="6" height="10" viewBox="0 0 6 10"><path d="M.8 .6 L5.200 5 L.8 9.400" fill="none" stroke="#a2a2a2" stroke-width="1.700"/></svg><svg style="left:43px;top:332px" width="15" height="15" viewBox="0 0 15 15"><path d="M.5 .5h7l3.500 3.500v10.500h-10.500z" fill="#f4f7fb" stroke="#b4b4b4"/><path d="M7.500 .5v3.500h3.500z" fill="#f3e6b8" stroke="#c8b888" stroke-width=".8"/><g fill="none" stroke="#b8860b" stroke-width="1.400"><ellipse cx="6.300" cy="12.300" rx="2.600" ry="1.600" transform="rotate(-42 6.300 12.300)"/><ellipse cx="9" cy="9.800" rx="2.800" ry="1.700" transform="rotate(-42 9 9.800)"/><ellipse cx="11.700" cy="7.400" rx="2.500" ry="1.600" transform="rotate(-42 11.700 7.400)"/></g></svg><span class="t" style="left:63.5px;top:332px;letter-spacing:0.17px;">r4f_linker.cmd</span>
<svg style="left:28px;top:354px" width="6" height="10" viewBox="0 0 6 10"><path d="M.8 .6 L5.200 5 L.8 9.400" fill="none" stroke="#a2a2a2" stroke-width="1.700"/></svg><svg style="left:45px;top:351px" width="12" height="14" viewBox="0 0 12 14"><path d="M.5 .5h6.500l3.500 3.500v9.500h-10z" fill="#fff" stroke="#a48b52"/><path d="M7 .5v3.500h3.500" fill="#f3ead0" stroke="#a48b52"/><rect x="1" y="4.500" width="9" height="7" fill="#e4ecf8"/><text x="1" y="11" font-family="Liberation Sans,sans-serif" font-weight="bold" font-size="10.500" fill="#1f4f9c" textLength="8.500" lengthAdjust="spacingAndGlyphs">.c</text></svg><span class="t" style="left:63.5px;top:350px;letter-spacing:0.15px;">sensor_mgmt.c</span>
<svg style="left:45px;top:369px" width="12" height="14" viewBox="0 0 12 14"><path d="M.5 .5h7.500l3.500 3.500v9.500h-11z" fill="#fff" stroke="#b0b4bc"/><path d="M8 .5v3.500h3.500" fill="#eef0f4" stroke="#b0b4bc"/><path d="M2.500 4.500h4M2.500 6.500h7M2.500 8.500h7M2.500 10.500h7M2.500 12h7" stroke="#7f9fd0" stroke-width=".9"/></svg><span class="t" style="left:63.5px;top:368px;letter-spacing:0.59px;">mmw.cfg</span>
</div>
<div id="ed" class="abs"><div id="edhead" class="abs"></div><div id="edtab" class="abs"></div>
<svg style="left:5px;top:6px" width="16" height="16" viewBox="0 0 16 16"><circle cx="8" cy="8" r="6.900" fill="#f8f8f8" stroke="#161616" stroke-width="1.800"/><path d="M12.200 3.800 L9.300 9.300 L3.800 12.200 L6.700 6.700z" fill="#d8232a"/><circle cx="8" cy="8" r="1" fill="#fff"/></svg>
<span class="t" style="left:24.5px;top:6px;letter-spacing:-0.35px;">Resource Explorer</span>
<svg style="left:151px;top:7px" width="12" height="14" viewBox="0 0 12 14"><defs><linearGradient id="gA" x1="0" y1="0" x2="0" y2="1"><stop offset="0" stop-color="#c0aa6c"/><stop offset="1" stop-color="#7f96c8"/></linearGradient></defs><path d="M.5 .5h7l3.500 3.500v9.500h-10.500z" fill="#f4f7fd" stroke="url(#gA)"/><path d="M7.500 .5v3.500h3.500z" fill="#ecd9a0" stroke="#c8aa60" stroke-width=".7"/><rect x="1.500" y="3.500" width="5.500" height="3" rx="1.200" fill="#fff" stroke="#e2b24e" stroke-width="1.100"/><path d="M2.500 6.800h5.500M5.300 6.800v4.500M3.800 11.300h3.700M8.700 9.800v3.400M7.600 4.300v1.200" stroke="#000" stroke-width="1.300" fill="none"/></svg>
<span class="t" style="left:167.3px;top:6px;letter-spacing:-0.37px;">AWR1443test10.ccxml</span>
<svg style="left:314px;top:7px" width="12" height="14" viewBox="0 0 12 14"><path d="M.5 .5h6.500l3.500 3.500v9.500h-10z" fill="#fff" stroke="#a48b52"/><path d="M7 .5v3.500h3.500" fill="#f3ead0" stroke="#a48b52"/><rect x="1" y="4.500" width="9" height="7" fill="#e4ecf8"/><text x="1" y="11" font-family="Liberation Sans,sans-serif" font-weight="bold" font-size="10.500" fill="#1f4f9c" textLength="8.500" lengthAdjust="spacingAndGlyphs">.c</text></svg>
<span class="t" style="left:330.5px;top:6px;letter-spacing:0.11px;">main.c</span>
<svg style="left:374px;top:8px" width="11" height="11" viewBox="0 0 11 11"><path d="M.6 2.500 L2.500 .6 L5.500 3.600 L8.500 .6 L10.400 2.500 L7.400 5.500 L10.400 8.500 L8.500 10.400 L5.500 7.400 L2.500 10.400 L.6 8.500 L3.600 5.500z" fill="#fff" stroke="#4c4c4c" stroke-width="1"/></svg>
<svg style="left:399px;top:7px" width="12" height="14" viewBox="0 0 12 14"><path d="M.5 .5h6.500l3.500 3.500v9.500h-10z" fill="#fff" stroke="#a48b52"/><path d="M7 .5v3.500h3.500" fill="#f3ead0" stroke="#a48b52"/><rect x="1" y="4.500" width="9" height="7" fill="#e4ecf8"/><text x=".7" y="11.300" font-family="Liberation Sans,sans-serif" font-weight="bold" font-size="9.500" fill="#1f4f9c" textLength="8.500" lengthAdjust="spacingAndGlyphs">.S</text></svg>
<span class="t" style="left:415.5px;top:6px;letter-spacing:0.02px;">boot.asm</span>
<div class="abs" style="left:825px;top:8px;width:10px;height:4px;background:#fff;border:1px solid #5a524a"></div>
<svg style="left:848px;top:8px" width="8" height="8" viewBox="0 0 8 8"><path d="M2.500 2.500v-2h5v4h-1.500" fill="#fff" stroke="#5a524a" stroke-width="1"/><path d="M2 .8h6" stroke="#5a524a" stroke-width="1.600"/><rect x=".5" y="3.500" width="5" height="4" fill="#fff" stroke="#5a524a"/><path d="M0 3.800h6" stroke="#5a524a" stroke-width="1.600"/></svg>
<div class="abs" style="left:0;top:26px;width:14px;height:634px;background:#f8f8f8"></div>
<div class="abs" style="left:14px;top:641px;width:29px;height:19px;background:#f8f8f8"></div>
<div class="abs" style="left:45px;top:56px;width:794px;height:15px;background:#e8f2fe"></div>
<svg style="left:0;top:0" width="1" height="1"><polyline points="234,160.5 236,158.5 238,160.5 240,158.5 242,160.5 244,158.5 246,160.5 248,158.5 250,160.5 252,158.5 254,160.5 256,158.5 258,160.5 260,158.5 262,160.5" fill="none" stroke="#fb6a38" stroke-width="1.100"/></svg><svg style="left:0;top:0" width="1" height="1"><polyline points="227,205.5 229,203.5 231,205.5 233,203.5 235,205.5 237,203.5 239,205.5 241,203.5 243,205.5 245,203.5 247,205.5 249,203.5 251,205.5 253,203.5 255,205.5 257,203.5 259,205.5 261,203.5 263,205.5 265,203.5 267,205.5 269,203.5 271,205.5 273,203.5 275,205.5 277,203.5 279,205.5 281,203.5 283,205.5 285,203.5 287,205.5 289,203.5 291,205.5 293,203.5 295,205.5 297,203.5 299,205.5 301,203.5 303,205.5 305,203.5 307,205.5 309,203.5 311,205.5 313,203.5 315,205.5 317,203.5 319,205.5" fill="none" stroke="#fb6a38" stroke-width="1.100"/></svg><svg style="left:0;top:0" width="1" height="1"><polyline points="150,580.5 152,578.5 154,580.5 156,578.5 158,580.5 160,578.5 162,580.5 164,578.5 166,580.5 168,578.5 170,580.5 172,578.5" fill="none" stroke="#fb6a38" stroke-width="1.100"/></svg>
<div class="ln">1466
1467
1468
1469
1470
1471
1472
1473
1474
1475
1476
1477
1478
1479
1480
1481
1482
1483
1484
1485
1486
1487
1488
1489
1490
1491
1492
1493
1494
1495
1496
1497
1498
1499
1500
1501
1502
1503
1504
1505
1506</div>
<div class="code"><span class="c"> */</span>
<span class="k">int</span> <span class="b">main</span> (<span class="k">void</span>)
{
    <span class="ty">Task_Params</span>     taskParams;
    <span class="ty">int32_t</span>         errCode;
    <span class="ty">SOC_Handle</span>      socHandle;
    <span class="ty">SOC_Cfg</span>         socCfg;

    <span class="c">/* Initialize the ESM: Dont clear errors as TI RTOS does it */</span>
    <span class="f">ESM_init</span>(0U);

    <span class="c">/* Initialize the SOC confiugration: */</span>
    <span class="f">memset</span> ((<span class="k">void</span> *)&amp;socCfg, 0, <span class="k">sizeof</span>(<span class="ty">SOC_Cfg</span>));

    <span class="c">/* Populate the SOC configuration: */</span>
    socCfg.<span class="fd">clockCfg</span> = <span class="en">SOC_SysClock_INIT</span>;

    <span class="c">/* Initialize the SOC Module: This is done as soon as the application is started</span>
    <span class="c"> * to ensure that the MPU is correctly configured. */</span>
    socHandle = <span class="f">SOC_init</span> (&amp;socCfg, &amp;errCode);
    <span class="k">if</span> (socHandle == NULL)
    {
        System_printf (<span class="s">"Error: SOC Module Initialization failed [Error code %d]\n"</span>, errCode);
        <span class="k">return</span> -1;
    }

    <span class="c">/* Initialize and populate the demo MCB */</span>
    <span class="f">memset</span> ((<span class="k">void</span>*)&amp;gMmwMCB, 0, <span class="k">sizeof</span>(<span class="ty">MmwDemo_MCB</span>));

    gMmwMCB.<span class="fd">socHandle</span> = socHandle;

    <span class="c">/* Initialize the DEMO configuration: */</span>
    gMmwMCB.<span class="fd">cfg</span>.<span class="fd">sysClockFrequency</span> = (200 * 1000000);
    gMmwMCB.<span class="fd">cfg</span>.<span class="fd">loggingBaudRate</span>   = 921600;
    gMmwMCB.<span class="fd">cfg</span>.<span class="fd">commandBaudRate</span>   = 115200;

    <span class="c">/* Default gui monitor selection */</span>
    gMmwMCB.<span class="fd">cfg</span>.<span class="fd">guiMonSel</span>.<span class="fd">detectedObjects</span> = 1;
    gMmwMCB.<span class="fd">cfg</span>.<span class="fd">guiMonSel</span>.<span class="fd">logMagRange</span> = 1;

    <span class="c">/* Default CFAR Configuration */</span></div>
<div class="abs" style="left:840px;top:26px;width:16px;height:615px;background:#f0f0f0"></div>
<div class="abs" style="left:856px;top:26px;width:14px;height:634px;background:#f8f8f8"></div>
<div class="abs" style="left:840px;top:641px;width:16px;height:19px;background:#f0f0f0"></div>
<div class="abs" style="left:840px;top:597px;width:15px;height:17px;background:#cdcdcd"></div>
<svg style="left:843.500px;top:32px" width="8" height="6" viewBox="0 0 8 6"><path d="M.8 5 L4 1.700 L7.200 5" fill="none" stroke="#484848" stroke-width="2.200"/></svg>
<svg style="left:843.500px;top:630px" width="8" height="6" viewBox="0 0 8 6"><path d="M.8 1 L4 4.300 L7.200 1" fill="none" stroke="#484848" stroke-width="2.200"/></svg>
<div class="abs" style="left:43px;top:642px;width:797px;height:16px;background:#f0f0f0"></div>
<svg style="left:48px;top:645px" width="6" height="9" viewBox="0 0 6 9"><path d="M5 .9 L1.600 4.500 L5 8.100" fill="none" stroke="#bababa" stroke-width="2"/></svg>
<svg style="left:828px;top:645px" width="6" height="9" viewBox="0 0 6 9"><path d="M1 .9 L4.400 4.500 L1 8.100" fill="none" stroke="#bababa" stroke-width="2"/></svg>
<div class="abs" style="left:0;top:658px;width:870px;height:1px;background:#fdfdfd"></div><div class="abs" style="left:0;top:0;width:1px;height:659px;background:linear-gradient(#f8f8f8,#e8e8e8)"></div>
<div class="abs" style="left:869px;top:26px;width:1px;height:633px;background:#fdfdfd"></div>
</div>
<div class="stack" style="left:1333px;top:80px;height:59px"></div>
<div class="dots" style="left:1341px;top:86px"></div>
<svg style="left:1345px;top:97px" width="8" height="8" viewBox="0 0 8 8"><path d="M2.500 2.500v-2h5v4h-1.500" fill="#fff" stroke="#5a524a" stroke-width="1"/><path d="M2 .8h6" stroke="#5a524a" stroke-width="1.600"/><rect x=".5" y="3.500" width="5" height="4" fill="#fff" stroke="#5a524a"/><path d="M0 3.800h6" stroke="#5a524a" stroke-width="1.600"/></svg>
<div class="stack" style="left:1333px;top:139px;height:59px"></div>
<div class="dots" style="left:1341px;top:145px"></div>
<svg style="left:1345px;top:156px" width="8" height="8" viewBox="0 0 8 8"><path d="M2.500 2.500v-2h5v4h-1.500" fill="#fff" stroke="#5a524a" stroke-width="1"/><path d="M2 .8h6" stroke="#5a524a" stroke-width="1.600"/><rect x=".5" y="3.500" width="5" height="4" fill="#fff" stroke="#5a524a"/><path d="M0 3.800h6" stroke="#5a524a" stroke-width="1.600"/></svg>
<div class="stack" style="left:1333px;top:198px;height:59px"></div>
<div class="dots" style="left:1341px;top:204px"></div>
<svg style="left:1345px;top:215px" width="8" height="8" viewBox="0 0 8 8"><path d="M2.500 2.500v-2h5v4h-1.500" fill="#fff" stroke="#5a524a" stroke-width="1"/><path d="M2 .8h6" stroke="#5a524a" stroke-width="1.600"/><rect x=".5" y="3.500" width="5" height="4" fill="#fff" stroke="#5a524a"/><path d="M0 3.800h6" stroke="#5a524a" stroke-width="1.600"/></svg>
<svg style="left:1344px;top:116px" width="12" height="14" viewBox="0 0 12 14"><defs><linearGradient id="gB" x1="0" y1="0" x2="0" y2="1"><stop offset="0" stop-color="#c0aa6c"/><stop offset="1" stop-color="#7f96c8"/></linearGradient></defs><path d="M.5 .5h7l3.500 3.500v9.500h-10.500z" fill="#f4f7fd" stroke="url(#gB)"/><path d="M7.500 .5v3.500h3.500z" fill="#ecd9a0" stroke="#c8aa60" stroke-width=".7"/><rect x="1.500" y="3.500" width="5.500" height="3" rx="1.200" fill="#fff" stroke="#e2b24e" stroke-width="1.100"/><path d="M2.500 6.800h5.500M5.300 6.800v4.500M3.800 11.300h3.700M8.700 9.800v3.400M7.600 4.300v1.200" stroke="#000" stroke-width="1.300" fill="none"/></svg>
<svg style="left:1343px;top:175px" width="13" height="14" viewBox="0 0 13 14"><rect x=".8" y=".8" width="11.400" height="9.900" rx=".8" fill="#eaf4ff" stroke="#2860b0" stroke-width="1.600"/><rect x="2" y="2" width="9" height="7.500" fill="none" stroke="#9aa8c0" stroke-width=".5"/><path d="M3.200 4.300h5M3.200 6.400h7" stroke="#28388a" stroke-width="1"/><path d="M4.500 11h4v1h3v1h-10v-1h3z" fill="#2860b0"/></svg>
<svg style="left:1341px;top:236px" width="16" height="11" viewBox="0 0 16 11"><g stroke="#2424a8" stroke-width="1.600"><path d="M0 .8h4M5 .8h3M9 .8h2M12 .8h2M15 .8h1M0 4.800h5M6 4.800h4M11 4.800h2M14 4.800h1M0 8.800h12"/></g><g stroke="#7ab0e8" stroke-width=".9" opacity=".8"><path d="M0 2h4M5 2h3M9 2h2M12 2h2M15 2h1M0 6h5M6 6h4M11 6h2M14 6h1M0 10h12"/></g></svg>
<div class="grip" style="left:1016px;top:747px;height:16px"></div>
<div class="grip" style="left:1329px;top:746px;height:17px;background:linear-gradient(180deg,#a39a82 0,#a39a82 3px,transparent 3px,transparent 5px,#a39a82 5px,#a39a82 7px,transparent 7px,transparent 10px,#a39a82 10px,#a39a82 12px,transparent 12px,transparent 14px,#a39a82 14px,#a39a82 17px)"></div>
<div class="grip" style="left:1349px;top:746px;height:17px;background:linear-gradient(180deg,#a39a82 0,#a39a82 3px,transparent 3px,transparent 5px,#a39a82 5px,#a39a82 7px,transparent 7px,transparent 10px,#a39a82 10px,#a39a82 12px,transparent 12px,transparent 14px,#a39a82 14px,#a39a82 17px)"></div>
<div class="abs" style="left:0;top:765px;width:1366px;height:1px;background:#fafafa"></div>
<div class="abs" style="left:0;top:766px;width:1366px;height:2px;background:#1b1b1b"></div>
<div class="abs" style="left:344px;top:766px;width:48px;height:2px;background:#4c4c4c"></div>
<div class="abs" style="left:1361px;top:766px;width:1px;height:2px;background:#8a8a8a"></div>
</body></html>
